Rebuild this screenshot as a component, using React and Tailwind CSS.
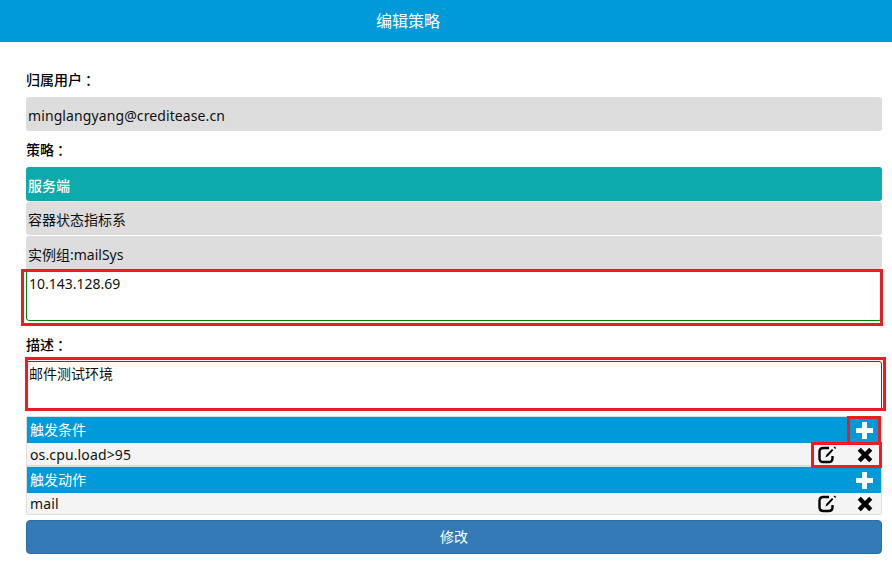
const cjk = "font-['Noto_Sans','Noto_Sans_CJK_SC',sans-serif]";

function EditIcon() {
  return (
    <svg width="20" height="20" viewBox="0 0 20 20" fill="none">
      <path d="M12 3H6.3Q2.5 3 2.5 6.8V13.2Q2.5 17 6.3 17H11.7Q15.5 17 15.5 13.2V11" stroke="#000" strokeWidth="2.4" />
      <path d="M8.4 12.4L9.4 9.8L15 3.9L16.3 5.2L10.9 11.2Z" fill="#000" />
      <path d="M16.6 2.5L17.7 1.4L19.2 2.9L18.1 4Z" fill="#000" />
    </svg>
  );
}

function CrossIcon() {
  return (
    <svg width="18" height="18" viewBox="0 0 18 18">
      <path d="M4.8 1.8L9 5.9L13.2 1.8L16.3 4.8L12.2 9L16.3 13.2L13.2 16.2L9 12.1L4.8 16.2L1.7 13.2L5.8 9L1.7 4.8Z" fill="#000" />
    </svg>
  );
}

function PlusIcon() {
  return (
    <svg width="18" height="18" viewBox="0 0 18 18">
      <path d="M6 1H11V7H17V12H11V18H6V12H0V7H6Z" fill="#fff" />
    </svg>
  );
}

function Label({ children, className }) {
  return (
    <div className={`flex text-sm leading-5 font-medium text-black ${className}`}>
      <span>{children}</span>
      <span className="ml-[3px]">：</span>
    </div>
  );
}

function SectionHead({ title }) {
  return (
    <div className="flex h-[26px] items-center justify-between bg-[#009ad8] pr-[7px] pl-[3px] text-sm text-white">
      <span>{title}</span>
      <PlusIcon />
    </div>
  );
}

function SectionRow({ text, className }) {
  return (
    <div className={`flex items-center justify-between bg-[#f4f4f4] pr-[7px] pl-[3px] ${className}`}>
      <span className="leading-5 tracking-[0.13px]">{text}</span>
      <span className="flex items-center gap-[19px]">
        <EditIcon />
        <CrossIcon />
      </span>
    </div>
  );
}

export default function App() {
  return (
    <div className={`relative h-[567px] w-[892px] overflow-hidden bg-white text-sm text-[#111] ${cjk}`}>
      <header className="flex h-[42px] items-center bg-[#009ad8] pl-[376px] text-base text-white">编辑策略</header>
      <main className="flex flex-col pr-[10px] pl-[26px]">
        <Label className="mt-7 h-[27px]">归属用户</Label>
        <div className="h-[34px] rounded-[3px] bg-[#ddd] pl-[2px] leading-[37px] tracking-[0.1px]">minglangyang@creditease.cn</div>
        <Label className="mt-[9px] h-[27px]">策略</Label>
        <div className="h-[34px] rounded-[3px] bg-[#0caaaa] pl-[2px] leading-[37px] font-medium text-white">服务端</div>
        <div className="mt-px h-[33px] rounded-[3px] bg-[#ddd] pl-[2px] leading-[36px]">容器状态指标系</div>
        <div className="mt-px h-[34px] rounded-[3px] bg-[#ddd] pl-[2px] leading-[37px]">实例组:mailSys</div>
        <div className="h-[51px] rounded-[3px] border border-[#008000] pt-[3px] pl-[2px] leading-5">10.143.128.69</div>
        <Label className="mt-[14px] h-[26px]">描述</Label>
        <div className="h-[50px] rounded-[3px] border border-[#d8000c] pt-[2px] pl-[2px] leading-5">邮件测试环境</div>
        <section className="mt-[5px] rounded-[2px] border border-[#ddd]">
          <SectionHead title="触发条件" />
          <SectionRow text="os.cpu.load>95" className="h-[22px] pt-[2px]" />
          <div className="h-[2px] bg-[#ddd]" />
          <SectionHead title="触发动作" />
          <SectionRow text="mail" className="h-[21px] pt-px" />
        </section>
        <button className="mt-[5px] h-[34px] rounded-[4px] border border-[#2e6da4] bg-[#337ab7] text-sm text-white">修改</button>
      </main>
      <div className="absolute top-[269px] left-[21px] h-[57px] w-[862px] border-3 border-[#ed1c24]" />
      <div className="absolute top-[357px] left-[25px] h-[54px] w-[861px] border-3 border-[#ed1c24]" />
      <div className="absolute top-[416px] left-[847px] h-[29px] w-[34px] border-3 border-[#ed1c24]" />
      <div className="absolute top-[442px] left-[811px] h-[26px] w-[71px] border-3 border-[#ed1c24]" />
    </div>
  );
}
